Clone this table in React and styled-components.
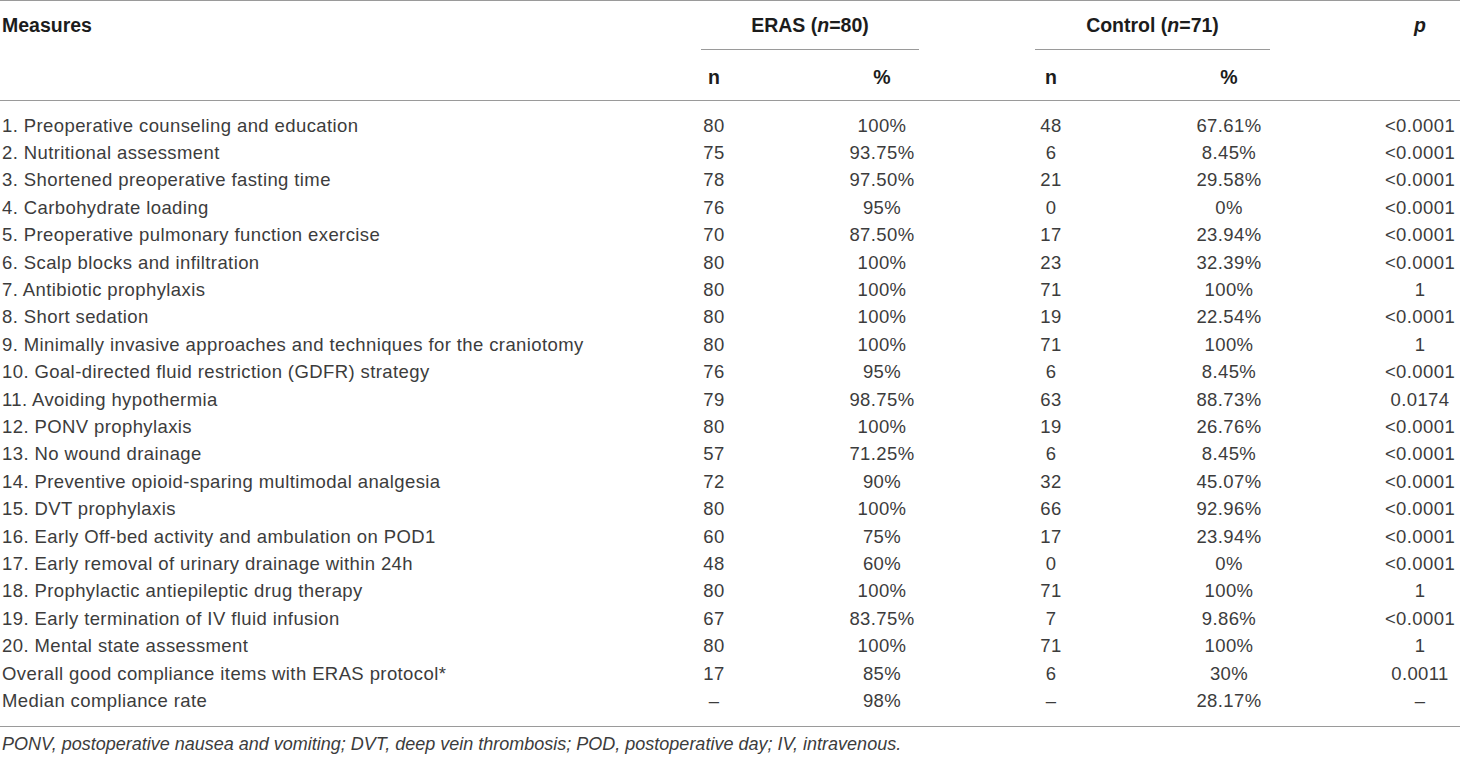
import React from "react";
import styled, { createGlobalStyle } from "styled-components";

const Global = createGlobalStyle`
  html, body { margin: 0; padding: 0; background: #ffffff; }
  body { font-family: "Liberation Sans", Arial, sans-serif; }
`;

const COLS = "660px 108px 228px 110px 246px 1fr";

const Page = styled.div`
  width: 1460px;
  background: #fff;
`;

const Table = styled.div`
  border-top: 1px solid #9a9a9a;
  border-bottom: 1px solid #9a9a9a;
`;

const Head = styled.div`
  display: grid;
  grid-template-columns: ${COLS};
  grid-template-rows: 49px 50px;
  border-bottom: 1px solid #9a9a9a;
  font-weight: bold;
  font-size: 19.5px;
  color: #1c1c1c;
`;

const HeadCell = styled.div`
  display: flex;
  align-items: center;
  justify-content: ${(p) => (p.$left ? "flex-start" : "center")};
  padding-left: ${(p) => p.$pl || 0}px;
  padding-top: ${(p) => p.$pt || 0}px;
  grid-column: ${(p) => p.$col || "auto"};
  grid-row: ${(p) => p.$row || "auto"};
`;

const GroupHead = styled.div`
  grid-column: ${(p) => p.$col};
  grid-row: 1;
  display: flex;
  padding-left: ${(p) => p.$ml}px;
  padding-right: ${(p) => p.$mr}px;
`;

const GroupLabel = styled.div`
  flex: 1;
  display: flex;
  align-items: center;
  justify-content: center;
  border-bottom: 1px solid #9a9a9a;
`;

const Body = styled.div`
  padding: 11px 0;
`;

const Row = styled.div`
  display: grid;
  grid-template-columns: ${COLS};
  height: 27.4px;
  align-items: center;
  font-size: 18.5px;
  color: #3c3c3c;
  letter-spacing: 0.4px;
`;

const Cell = styled.div`
  text-align: ${(p) => (p.$left ? "left" : "center")};
  padding-left: ${(p) => p.$pl || 0}px;
  white-space: nowrap;
`;

const Footnote = styled.div`
  padding: 7px 2px 0;
  font-style: italic;
  font-size: 18px;
  line-height: 20px;
  color: #3c3c3c;
`;

const rows = [
  ["1. Preoperative counseling and education", "80", "100%", "48", "67.61%", "<0.0001"],
  ["2. Nutritional assessment", "75", "93.75%", "6", "8.45%", "<0.0001"],
  ["3. Shortened preoperative fasting time", "78", "97.50%", "21", "29.58%", "<0.0001"],
  ["4. Carbohydrate loading", "76", "95%", "0", "0%", "<0.0001"],
  ["5. Preoperative pulmonary function exercise", "70", "87.50%", "17", "23.94%", "<0.0001"],
  ["6. Scalp blocks and infiltration", "80", "100%", "23", "32.39%", "<0.0001"],
  ["7. Antibiotic prophylaxis", "80", "100%", "71", "100%", "1"],
  ["8. Short sedation", "80", "100%", "19", "22.54%", "<0.0001"],
  ["9. Minimally invasive approaches and techniques for the craniotomy", "80", "100%", "71", "100%", "1"],
  ["10. Goal-directed fluid restriction (GDFR) strategy", "76", "95%", "6", "8.45%", "<0.0001"],
  ["11. Avoiding hypothermia", "79", "98.75%", "63", "88.73%", "0.0174"],
  ["12. PONV prophylaxis", "80", "100%", "19", "26.76%", "<0.0001"],
  ["13. No wound drainage", "57", "71.25%", "6", "8.45%", "<0.0001"],
  ["14. Preventive opioid-sparing multimodal analgesia", "72", "90%", "32", "45.07%", "<0.0001"],
  ["15. DVT prophylaxis", "80", "100%", "66", "92.96%", "<0.0001"],
  ["16. Early Off-bed activity and ambulation on POD1", "60", "75%", "17", "23.94%", "<0.0001"],
  ["17. Early removal of urinary drainage within 24h", "48", "60%", "0", "0%", "<0.0001"],
  ["18. Prophylactic antiepileptic drug therapy", "80", "100%", "71", "100%", "1"],
  ["19. Early termination of IV fluid infusion", "67", "83.75%", "7", "9.86%", "<0.0001"],
  ["20. Mental state assessment", "80", "100%", "71", "100%", "1"],
  ["Overall good compliance items with ERAS protocol*", "17", "85%", "6", "30%", "0.0011"],
  ["Median compliance rate", "–", "98%", "–", "28.17%", "–"],
];

export default function App() {
  return (
    <Page>
      <Global />
      <Table>
        <Head>
          <HeadCell $left $pl={2} $col="1" $row="1">Measures</HeadCell>
          <GroupHead $col="2 / 4" $ml={41} $mr={77}>
            <GroupLabel>
              ERAS (<i>n</i>=80)
            </GroupLabel>
          </GroupHead>
          <GroupHead $col="4 / 6" $ml={39} $mr={82}>
            <GroupLabel>
              Control (<i>n</i>=71)
            </GroupLabel>
          </GroupHead>
          <HeadCell $col="6" $row="1" $pl={28}><i>p</i></HeadCell>
          <HeadCell $col="2" $row="2" $pt={5}>n</HeadCell>
          <HeadCell $col="3" $row="2" $pt={5}>%</HeadCell>
          <HeadCell $col="4" $row="2" $pt={5}>n</HeadCell>
          <HeadCell $col="5" $row="2" $pt={5}>%</HeadCell>
        </Head>
        <Body>
          {rows.map((r) => (
            <Row key={r[0]}>
              <Cell $left $pl={2}>{r[0]}</Cell>
              <Cell>{r[1]}</Cell>
              <Cell>{r[2]}</Cell>
              <Cell>{r[3]}</Cell>
              <Cell>{r[4]}</Cell>
              <Cell $pl={28}>{r[5]}</Cell>
            </Row>
          ))}
        </Body>
      </Table>
      <Footnote>
        PONV, postoperative nausea and vomiting; DVT, deep vein thrombosis; POD, postoperative day; IV, intravenous.
      </Footnote>
    </Page>
  );
}
